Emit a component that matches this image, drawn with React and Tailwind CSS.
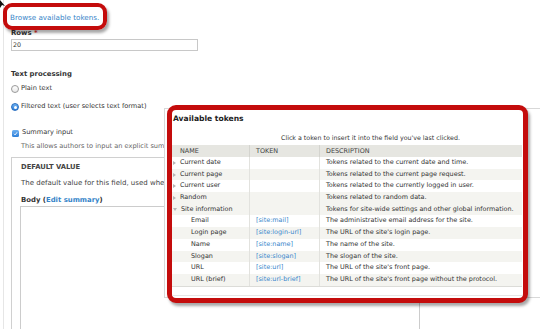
import React from 'react';

const rows = [
  { name: 'Current date', token: '', desc: 'Tokens related to the current date and time.', child: false, open: false, alt: false },
  { name: 'Current page', token: '', desc: 'Tokens related to the current page request.', child: false, open: false, alt: true },
  { name: 'Current user', token: '', desc: 'Tokens related to the currently logged in user.', child: false, open: false, alt: false },
  { name: 'Random', token: '', desc: 'Tokens related to random data.', child: false, open: false, alt: true },
  { name: 'Site information', token: '', desc: 'Tokens for site-wide settings and other global information.', child: false, open: true, alt: true },
  { name: 'Email', token: '[site:mail]', desc: 'The administrative email address for the site.', child: true, alt: false },
  { name: 'Login page', token: '[site:login-url]', desc: "The URL of the site's login page.", child: true, alt: true },
  { name: 'Name', token: '[site:name]', desc: 'The name of the site.', child: true, alt: false },
  { name: 'Slogan', token: '[site:slogan]', desc: 'The slogan of the site.', child: true, alt: true },
  { name: 'URL', token: '[site:url]', desc: "The URL of the site's front page.", child: true, alt: false },
  { name: 'URL (brief)', token: '[site:url-brief]', desc: "The URL of the site's front page without the protocol.", child: true, alt: true },
];

const Arrow = ({ open }) =>
  open ? (
    <span className="w-0 h-0 border-x-[2px] border-t-[3px] border-x-transparent border-t-[#b5b5b5]" />
  ) : (
    <span className="w-0 h-0 border-y-[2px] border-l-[3px] border-y-transparent border-l-[#b5b5b5]" />
  );

const TokenTable = () => (
  <div className="w-full text-[6.45px] text-[#333]">
    <div className="grid grid-cols-[78px_70px_1fr] h-[12px] bg-[#e6e6e1] text-[#444] uppercase leading-[12px]">
      <div className="pl-[8px] border-r border-[#d4d4cf]">Name</div>
      <div className="pl-[6px] border-r border-[#d4d4cf]">Token</div>
      <div className="pl-[6px]">Description</div>
    </div>
    {rows.map((r) => (
      <div
        key={r.name}
        className={`grid grid-cols-[78px_70px_1fr] h-[11.7px] leading-[11.7px] ${r.alt ? 'bg-[#f4f4f0]' : 'bg-white'}`}
      >
        <div className="flex items-center border-r border-[#e2e2de] pl-[1px] whitespace-nowrap">
          {r.child ? (
            <span className="pl-[18px]">{r.name}</span>
          ) : (
            <>
              <Arrow open={r.open} />
              <span className="pl-[4px]">{r.name}</span>
            </>
          )}
        </div>
        <div className="pl-[6px] border-r border-[#e2e2de] text-[#3a87cc] whitespace-nowrap">{r.token}</div>
        <div className="pl-[6px] whitespace-nowrap">{r.desc}</div>
      </div>
    ))}
    <div className="border-t border-[#dcdcd8] h-[9px]" />
    <div className="border-t border-[#e6e6e6]" />
  </div>
);

export default function App() {
  return (
    <div
      className="relative w-[540px] h-[329px] overflow-hidden bg-white text-[#333]"
      style={{ fontFamily: '"DejaVu Sans", "Liberation Sans", sans-serif' }}
    >
      <div className="ml-[3px] border-l border-[#e6e6e6] h-full pl-[6px]">
        <div className="pt-[13px] h-[28px] leading-[10px] text-[7.2px] text-[#3584c8] whitespace-nowrap">Browse available tokens.</div>
        <div className="h-[11px] leading-[11px] text-[6.9px] font-bold text-[#333] pl-[1px]">
          Rows <span className="text-[#d33]">*</span>
        </div>
        <div className="ml-[1px] w-[187px] h-[12px] border border-[#c8c8c8] text-[6.3px] leading-[10px] pl-[1px] text-[#333]">20</div>

        <div className="mt-[18px] h-[10px] leading-[10px] text-[6.9px] font-bold pl-[1px]">Text processing</div>
        <div className="mt-[5px] flex items-center h-[10px] gap-[2px] pl-[1px] text-[6.6px]">
          <span className="w-[8px] h-[8px] rounded-full border border-[#9a9a9a] bg-gradient-to-b from-white to-[#e9e9e9]" />
          <span>Plain text</span>
        </div>
        <div className="mt-[8px] flex items-center h-[10px] gap-[2px] pl-[1px] text-[6.6px]">
          <span className="w-[8px] h-[8px] rounded-full bg-gradient-to-b from-[#6fb1f0] to-[#2b7fd9] border border-[#2a6fc0] flex items-center justify-center">
            <span className="w-[3px] h-[3px] rounded-full bg-white" />
          </span>
          <span>Filtered text (user selects text format)</span>
        </div>
        <div className="mt-[16px] flex items-center h-[10px] gap-[3px] pl-[2px] text-[6.6px]">
          <span className="w-[7px] h-[7px] rounded-[1.5px] bg-gradient-to-b from-[#6fb1f0] to-[#2b7fd9] flex items-center justify-center">
            <svg width="5" height="5" viewBox="0 0 10 10">
              <path d="M2 5.5 L4.2 7.8 L8.2 2.5" fill="none" stroke="#fff" strokeWidth="1.8" />
            </svg>
          </span>
          <span>Summary input</span>
        </div>
        <div className="mt-[3px] h-[10px] leading-[10px] pl-[11px] text-[6.6px] text-[#666] whitespace-nowrap">
          This allows authors to input an explicit summary, to be displayed instead of the automatically trimmed text.
        </div>

        <div className="mt-[6px] ml-[1px] w-[700px] h-[200px] border border-[#d0d0d0] pl-[9px]">
          <div className="mt-[4px] h-[10px] leading-[10px] text-[6.8px] font-bold text-[#444] uppercase">Default value</div>
          <div className="mt-[6px] h-[10px] leading-[10px] text-[7px] text-[#444] whitespace-nowrap">
            The default value for this field, used when creating new content.
          </div>
          <div className="mt-[7px] h-[10px] leading-[10px] text-[6.9px] font-bold text-[#333]">
            Body (<span className="text-[#3584c8]">Edit summary</span>)
          </div>
          <div className="ml-[-1px] mt-[1px] w-[400px] h-[200px] border border-[#ccc] bg-white" />
        </div>
      </div>

      {/* cursor tip */}
      <svg className="absolute left-0 top-0" width="6" height="8" viewBox="0 0 6 8">
        <path d="M0 0 L5 6 L2 5 L0 8 Z" fill="#111" />
      </svg>

      {/* red annotation around link */}
      <div className="absolute left-[3px] top-[3px] w-[104px] h-[27px] rounded-[9px] border-[4px] border-[#c40c0c] shadow-[2px_3px_3px_rgba(0,0,0,0.35)]" />

      {/* dialog behind */}
      <div className="absolute left-[164px] top-[108px] w-[420px] h-[190px] border border-[#d8d8d8] bg-white" />

      {/* token dialog with red annotation */}
      <div className="absolute left-[167px] top-[105px] w-[361px] h-[198px] rounded-[9px] border-[5px] border-[#c40c0c] bg-white shadow-[2px_3px_3px_rgba(0,0,0,0.35)] overflow-hidden">
        <div className="h-[17px] leading-[17px] pl-[1px] text-[7.6px] font-bold text-[#222]">Available tokens</div>
        <div className="mt-[5px] h-[11px] leading-[11px] pl-[109px] text-[6.3px] text-[#333] whitespace-nowrap">
          Click a token to insert it into the field you've last clicked.
        </div>
        <div className="mt-[2px] pr-[1px]">
          <TokenTable />
        </div>
      </div>
    </div>
  );
}
